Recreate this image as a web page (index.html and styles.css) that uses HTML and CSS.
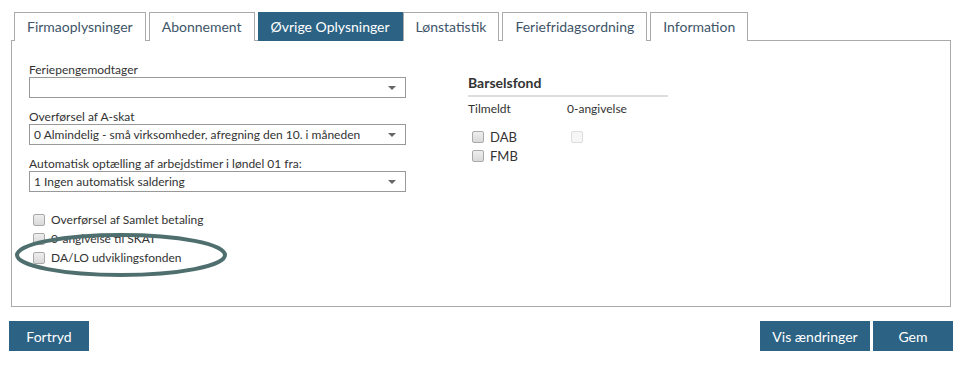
FILE: index.html
```html
<!DOCTYPE html>
<html lang="da">
<head>
    <meta charset="UTF-8">
    <title>Øvrige Oplysninger</title>
    <link rel="stylesheet" href="styles.css">
</head>
<body>

    <div class="page">
        <ul class="tabs">
            <li class="tab">Firmaoplysninger</li>
            <li class="tab">Abonnement</li>
            <li class="tab active">Øvrige Oplysninger</li>
            <li class="tab">Lønstatistik</li>
            <li class="tab">Feriefridagsordning</li>
            <li class="tab">Information</li>
        </ul>

        <div class="panel">
            <div class="col-left">
                <div class="field">
                    <label>Feriepengemodtager</label>
                    <div class="select"><span></span><i class="caret"></i></div>
                </div>
                <div class="field">
                    <label>Overførsel af A-skat</label>
                    <div class="select"><span>0 Almindelig - små virksomheder, afregning den 10. i måneden</span><i class="caret"></i></div>
                </div>
                <div class="field">
                    <label>Automatisk optælling af arbejdstimer i løndel 01 fra:</label>
                    <div class="select"><span>1 Ingen automatisk saldering</span><i class="caret"></i></div>
                </div>

                <div class="checks">
                    <div class="check-row"><span class="box"></span>Overførsel af Samlet betaling</div>
                    <div class="check-row"><span class="box"></span>0-angivelse til SKAT</div>
                    <div class="check-row"><span class="box"></span>DA/LO udviklingsfonden</div>
                    <!-- annotation ring drawn over the last option -->
                    <svg class="ring" width="216" height="48" viewBox="0 0 216 48">
                        <ellipse cx="108" cy="24" rx="104" ry="20" fill="none" stroke="#4f6f6f" stroke-width="4"/>
                    </svg>
                </div>
            </div>

            <div class="col-right">
                <h3>Barselsfond</h3>
                <div class="fund-grid">
                    <div class="fund-head">Tilmeldt</div>
                    <div class="fund-head">0-angivelse</div>
                    <div class="fund-cell"><span class="box"></span>DAB</div>
                    <div class="fund-cell"><span class="box disabled"></span></div>
                    <div class="fund-cell"><span class="box"></span>FMB</div>
                    <div class="fund-cell"></div>
                </div>
            </div>
        </div>

        <div class="actions">
            <button class="btn">Fortryd</button>
            <div class="actions-right">
                <button class="btn wide">Vis ændringer</button>
                <button class="btn">Gem</button>
            </div>
        </div>
    </div>

</body>
</html>
```

FILE: styles.css
```css
* {
    margin: 0;
    padding: 0;
    box-sizing: border-box;
    font-family: Lato, "Open Sans", Arial, sans-serif;
}
body {
    background: #fff;
    color: #333;
}
.page {
    padding: 12px 8px 0 9px;
}
/* Tabs */
.tabs {
    list-style: none;
    display: flex;
    gap: 3px;
    margin-left: 5px;
    height: 28px;
}
.tab {
    height: 29px;
    padding: 0 12px;
    border: 1px solid #aaa;
    border-bottom: none;
    background: #fff;
    color: #3e5569;
    font-size: 14px;
    line-height: 28px;
    position: relative;
    z-index: 1;
}
.tab.active {
    background: #2c6384;
    border-color: #2c6384;
    color: #fff;
}
.tab.active + .tab {
    margin-left: -3px;
}
/* Panel */
.panel {
    margin: 0 2px;
    height: 267px;
    border: 1px solid #aaa;
    padding: 22px 17px 0 17px;
    display: flex;
}
.col-left {
    width: 377px;
}
.field {
    margin-bottom: 12px;
}
.field label {
    display: block;
    font-size: 12px;
    line-height: 14px;
    color: #333;
}
.select {
    height: 21px;
    border: 1px solid #999;
    display: flex;
    align-items: center;
    justify-content: space-between;
    padding: 0 9px 0 4px;
    font-size: 12px;
    color: #333;
}
.caret {
    width: 0;
    height: 0;
    border-left: 4px solid transparent;
    border-right: 4px solid transparent;
    border-top: 4px solid #666;
}
.checks {
    position: relative;
    margin-top: 18px;
}
.check-row {
    display: flex;
    align-items: center;
    height: 19px;
    font-size: 12px;
    color: #333;
}
.box {
    display: inline-block;
    width: 12px;
    height: 12px;
    border: 1px solid #a9a9a9;
    border-radius: 2px;
    background: linear-gradient(#eee, #d9d9d9);
    margin: 0 6px 0 4px;
}
.box.disabled {
    border-color: #ddd;
    background: #f6f6f6;
}
.ring {
    position: absolute;
    left: -16px;
    top: 21px;
}
/* Right column */
.col-right {
    margin-left: 62px;
    padding-top: 12px;
}
.col-right h3 {
    width: 200px;
    font-size: 14px;
    font-weight: bold;
    color: #333;
    line-height: 16px;
    padding-bottom: 4px;
    border-bottom: 2px solid #ddd;
}
.fund-grid {
    display: grid;
    grid-template-columns: 99px 100px;
    margin-top: 4px;
}
.fund-head {
    font-size: 12px;
    line-height: 16px;
    margin-bottom: 10px;
}
.fund-cell {
    display: flex;
    align-items: center;
    height: 19px;
    font-size: 13px;
    color: #333;
}
/* Buttons */
.actions {
    display: flex;
    justify-content: space-between;
    margin-top: 14px;
}
.actions-right {
    display: flex;
    gap: 3px;
}
.btn {
    width: 80px;
    height: 30px;
    border: none;
    background: #2c6384;
    color: #fff;
    font-size: 14px;
    cursor: pointer;
}
.btn.wide {
    width: 110px;
}
.btn:hover {
    background: #245470;
}
```
